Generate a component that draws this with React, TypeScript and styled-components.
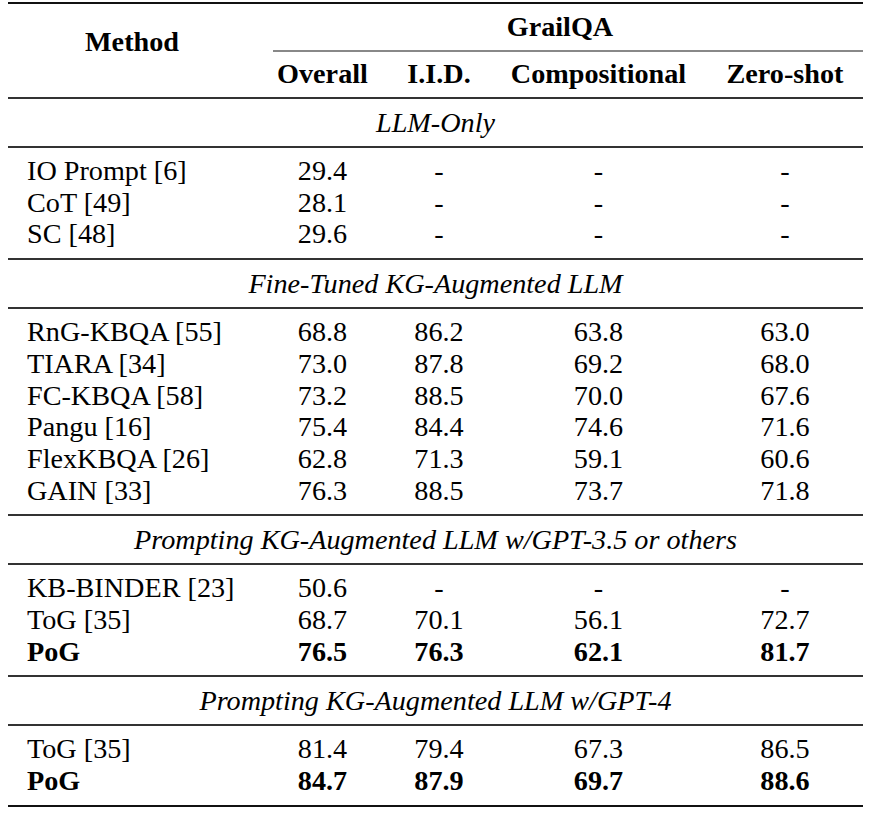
import styled, { createGlobalStyle } from 'styled-components';

const GlobalStyle = createGlobalStyle`
  html, body {
    margin: 0;
    padding: 0;
    background: #fff;
  }
  body {
    font-family: "Liberation Serif", "Times New Roman", serif;
    color: #000;
  }
`;

const COLS = '249px 131px 102px 217px 156px';

const Table = styled.div`
  width: 855px;
  margin: 2px 0 0 8px;
  border-top: 2px solid #111;
  border-bottom: 2px solid #111;
  font-size: 28.2px;
`;

const Head = styled.div`
  display: grid;
  grid-template-columns: ${COLS};
  grid-template-rows: 48px 45px;
  border-bottom: 2px solid #333;
  font-weight: bold;
  line-height: 32px;
`;

const MethodHead = styled.div`
  grid-row: 1 / 3;
  padding: 22px 20px 0 19px;
  text-align: center;
`;

const GroupHead = styled.div`
  grid-column: 2 / 6;
  display: flex;
  flex-direction: column;
  padding-top: 7px;
  text-align: center;
`;

const GroupRule = styled.div`
  height: 2px;
  margin: 7px 0 0 16px;
  background: #888;
`;

const ColHead = styled.div`
  padding-top: 6px;
  text-align: center;
  white-space: nowrap;
`;

const Section = styled.div`
  padding: 8px 0 7px;
  line-height: 32px;
  text-align: center;
  font-style: italic;
  border-bottom: 2px solid #333;
`;

const Group = styled.div<{ $last?: boolean }>`
  padding: 7px 0 8px;
  border-bottom: ${({ $last }) => ($last ? 'none' : '2px solid #333')};
`;

const Row = styled.div<{ $bold?: boolean }>`
  display: grid;
  grid-template-columns: ${COLS};
  line-height: 31.7px;
  font-weight: ${({ $bold }) => ($bold ? 'bold' : 'normal')};
`;

const Name = styled.div`
  padding-left: 19px;
  white-space: nowrap;
`;

const Value = styled.div`
  text-align: center;
`;

type Entry = { name: string; vals: string[]; bold?: boolean };
type Block = { title: string; rows: Entry[] };

const blocks: Block[] = [
  {
    title: 'LLM-Only',
    rows: [
      { name: 'IO Prompt [6]', vals: ['29.4', '-', '-', '-'] },
      { name: 'CoT [49]', vals: ['28.1', '-', '-', '-'] },
      { name: 'SC [48]', vals: ['29.6', '-', '-', '-'] },
    ],
  },
  {
    title: 'Fine-Tuned KG-Augmented LLM',
    rows: [
      { name: 'RnG-KBQA [55]', vals: ['68.8', '86.2', '63.8', '63.0'] },
      { name: 'TIARA [34]', vals: ['73.0', '87.8', '69.2', '68.0'] },
      { name: 'FC-KBQA [58]', vals: ['73.2', '88.5', '70.0', '67.6'] },
      { name: 'Pangu [16]', vals: ['75.4', '84.4', '74.6', '71.6'] },
      { name: 'FlexKBQA [26]', vals: ['62.8', '71.3', '59.1', '60.6'] },
      { name: 'GAIN [33]', vals: ['76.3', '88.5', '73.7', '71.8'] },
    ],
  },
  {
    title: 'Prompting KG-Augmented LLM w/GPT-3.5 or others',
    rows: [
      { name: 'KB-BINDER [23]', vals: ['50.6', '-', '-', '-'] },
      { name: 'ToG [35]', vals: ['68.7', '70.1', '56.1', '72.7'] },
      { name: 'PoG', vals: ['76.5', '76.3', '62.1', '81.7'], bold: true },
    ],
  },
  {
    title: 'Prompting KG-Augmented LLM w/GPT-4',
    rows: [
      { name: 'ToG [35]', vals: ['81.4', '79.4', '67.3', '86.5'] },
      { name: 'PoG', vals: ['84.7', '87.9', '69.7', '88.6'], bold: true },
    ],
  },
];

export default function App() {
  return (
    <>
      <GlobalStyle />
      <Table>
        <Head>
          <MethodHead>Method</MethodHead>
          <GroupHead>
            <div>GrailQA</div>
            <GroupRule />
          </GroupHead>
          <ColHead>Overall</ColHead>
          <ColHead>I.I.D.</ColHead>
          <ColHead>Compositional</ColHead>
          <ColHead>Zero-shot</ColHead>
        </Head>
        {blocks.map((b, bi) => (
          <div key={b.title}>
            <Section>{b.title}</Section>
            <Group $last={bi === blocks.length - 1}>
              {b.rows.map((r) => (
                <Row key={r.name} $bold={r.bold}>
                  <Name>{r.name}</Name>
                  {r.vals.map((v, i) => (
                    <Value key={i}>{v}</Value>
                  ))}
                </Row>
              ))}
            </Group>
          </div>
        ))}
      </Table>
    </>
  );
}
